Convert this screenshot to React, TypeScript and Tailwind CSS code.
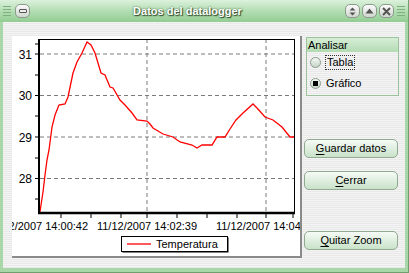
import React from 'react';

const stripes =
  'bg-[repeating-linear-gradient(to_bottom,#f4f4f4_0px,#f4f4f4_1px,#e9e9e9_1px,#e9e9e9_2px)]';

// curve points in window coordinates
const curve: [number, number][] = [
  [40, 212], [41, 205], [43, 192], [45, 175], [47, 160], [49, 150], [52, 127], [55, 115],
  [59, 105], [65, 104], [68, 97], [73, 73], [77, 62], [82, 53], [87, 42], [91, 45],
  [95, 53], [101, 73], [105, 75], [110, 87], [113, 88], [120, 100], [125, 105], [132, 113],
  [137, 120], [147, 121], [150, 124], [153, 128], [163, 134], [173, 137], [180, 142],
  [192, 145], [197, 148], [202, 145], [212, 145], [217, 137], [225, 137], [230, 129],
  [236, 120], [243, 113], [253, 104], [257, 108], [265, 117], [273, 120], [282, 127],
  [290, 137], [294, 137],
];

const gridY = [54, 95.5, 137, 178.5];
const labelsY = ['31', '30', '29', '28'];
const gridX = [147, 266];
const ticksX = [61, 91, 121, 147, 177, 207, 237, 266, 293];
const ticksY = [44, 54, 75, 95.5, 116, 137, 158, 178.5, 199];

const Grip = () => (
  <div className="flex flex-col gap-[2px] w-[8px]">
    <div className="h-px bg-[#7fae7f]" />
    <div className="h-px bg-[#7fae7f]" />
    <div className="h-px bg-[#7fae7f]" />
    <div className="h-px bg-[#7fae7f]" />
  </div>
);

const TitleButton = ({ children }: { children: React.ReactNode }) => (
  <div className="w-[15px] h-[14px] rounded-[5px] border border-[#8c9a8c] bg-gradient-to-b from-[#fbfbfb] to-[#cfd6cf] flex items-center justify-center">
    {children}
  </div>
);

const Chart = () => (
  <svg width={288} height={220} className="block">
    <g transform="translate(-12,-36)" fontFamily="'Liberation Sans', Arial, sans-serif">
      {gridY.map((y) => (
        <line key={y} x1={40} x2={294} y1={y} y2={y} stroke="#7a7a7a" strokeDasharray="4 3" />
      ))}
      {gridX.map((x) => (
        <line key={x} x1={x} x2={x} y1={39} y2={213} stroke="#7a7a7a" strokeDasharray="4 3" />
      ))}
      <polyline
        points={curve.map((p) => p.join(',')).join(' ')}
        fill="none"
        stroke="#ff0000"
        strokeWidth={1.3}
      />
      <line x1={39} x2={294.5} y1={39.5} y2={39.5} stroke="#000" />
      <line x1={294.5} x2={294.5} y1={39} y2={213} stroke="#000" />
      <line x1={39} x2={39} y1={39} y2={214} stroke="#000" strokeWidth={2} />
      <line x1={38} x2={295} y1={213} y2={213} stroke="#000" strokeWidth={2.5} />
      {ticksY.map((y) => (
        <line key={y} x1={35} x2={38} y1={y} y2={y} stroke="#000" />
      ))}
      {ticksX.map((x) => (
        <line key={x} x1={x} x2={x} y1={214} y2={218} stroke="#000" />
      ))}
      {gridY.map((y, i) => (
        <text key={y} x={32} y={y + 4.5} fontSize={12} textAnchor="end" fill="#000">
          {labelsY[i]}
        </text>
      ))}
      <text x={38} y={230} fontSize={11} textAnchor="middle">11/12/2007 14:00:42</text>
      <text x={147} y={230} fontSize={11} textAnchor="middle">11/12/2007 14:02:39</text>
      <text x={266} y={230} fontSize={11} textAnchor="middle">11/12/2007 14:04:36</text>
      <rect x={122.5} y={237.5} width={106} height={15} fill="#000" />
      <rect x={121.5} y={236.5} width={106} height={15} fill="#fff" stroke="#000" />
      <line x1={127} x2={151} y1={244} y2={244} stroke="#ff0000" strokeWidth={1.3} />
      <text x={156} y={248} fontSize={11}>Temperatura</text>
    </g>
  </svg>
);

const Radio = ({ checked }: { checked?: boolean }) => (
  <div className="w-[11px] h-[11px] rounded-full border border-[#8e9a8e] bg-gradient-to-b from-[#f4f8f4] to-[#c6d6c6] flex items-center justify-center">
    {checked && <div className="w-[5px] h-[5px] bg-black" />}
  </div>
);

const Button = ({ mn, rest }: { mn: string; rest: string }) => (
  <button className="w-[94px] h-[19px] rounded-[5px] border border-[#91a891] bg-gradient-to-b from-[#f6fbf6] to-[#c9e2c9] text-[11px] text-black leading-none flex items-center justify-center">
    <span className="underline underline-offset-2">{mn}</span>
    {rest}
  </button>
);

export default function App() {
  return (
    <div
      className="w-[409px] h-[273px] flex flex-col bg-[#a9d7a9] border-r border-b border-[#6f9f6f]"
      style={{ fontFamily: "'Liberation Sans', Arial, sans-serif" }}
    >
      {/* title bar */}
      <div className="h-[22px] flex items-center pl-[3px] pr-[3px] bg-gradient-to-b from-[#dcf1dc] via-[#b3deb3] to-[#93cc93]">
        <Grip />
        <div className="ml-[4px]">
          <TitleButton>
            <div className="w-[8px] h-[4px] rounded-[1px] border border-[#555] bg-[#eee]" />
          </TitleButton>
        </div>
        <div className="flex-1 text-center text-[11px] font-bold text-white [text-shadow:0_0_2px_#2f4f2f,1px_1px_1px_#2f4f2f]">
          Datos del datalogger
        </div>
        <div className="flex gap-[2px] mr-[3px]">
          <TitleButton>
            <svg width="7" height="9" viewBox="0 0 7 9">
              <path d="M3.5 0.5 L6.5 3.5 H0.5 Z M3.5 8.5 L6.5 5.5 H0.5 Z" fill="#555" />
            </svg>
          </TitleButton>
          <TitleButton>
            <svg width="9" height="6" viewBox="0 0 9 6">
              <path d="M4.5 0.5 L8.5 5.5 H0.5 Z" fill="#555" />
            </svg>
          </TitleButton>
          <TitleButton>
            <svg width="9" height="9" viewBox="0 0 9 9">
              <path d="M1 1 L8 8 M8 1 L1 8" stroke="#555" strokeWidth="2" />
            </svg>
          </TitleButton>
        </div>
        <Grip />
      </div>

      {/* body */}
      <div className={`flex-1 ml-[3px] mr-[3px] mb-[4px] flex ${stripes}`}>
        <div className="ml-[9px] mt-[14px] w-[290px] h-[222px] bg-white border-r-2 border-b-2 border-[#8a8a8a] overflow-hidden">
          <Chart />
        </div>
        <div className="ml-[2px] pt-[15px] flex flex-col">
          <div className="ml-[2px] w-[93px] h-[59px] border border-[#9cc29c]">
            <div className="h-[14px] px-[1px] bg-gradient-to-b from-[#d7eed7] to-[#b3dbb3] text-[11px] leading-[14px] text-black">
              Analisar
            </div>
            <div className="h-[21px] flex items-center pl-[3px]">
              <Radio />
              <span className="ml-[4px] px-[1px] border border-dotted border-[#333] text-[11px] leading-[13px] text-black">
                Tabla
              </span>
            </div>
            <div className="h-[21px] flex items-center pl-[3px]">
              <Radio checked />
              <span className="ml-[5px] text-[11px] text-black">Gráfico</span>
            </div>
          </div>
          <div className="mt-[43px]">
            <Button mn="G" rest="uardar datos" />
          </div>
          <div className="mt-[13px]">
            <Button mn="C" rest="errar" />
          </div>
          <div className="mt-[41px]">
            <Button mn="Q" rest="uitar Zoom" />
          </div>
        </div>
      </div>
    </div>
  );
}
